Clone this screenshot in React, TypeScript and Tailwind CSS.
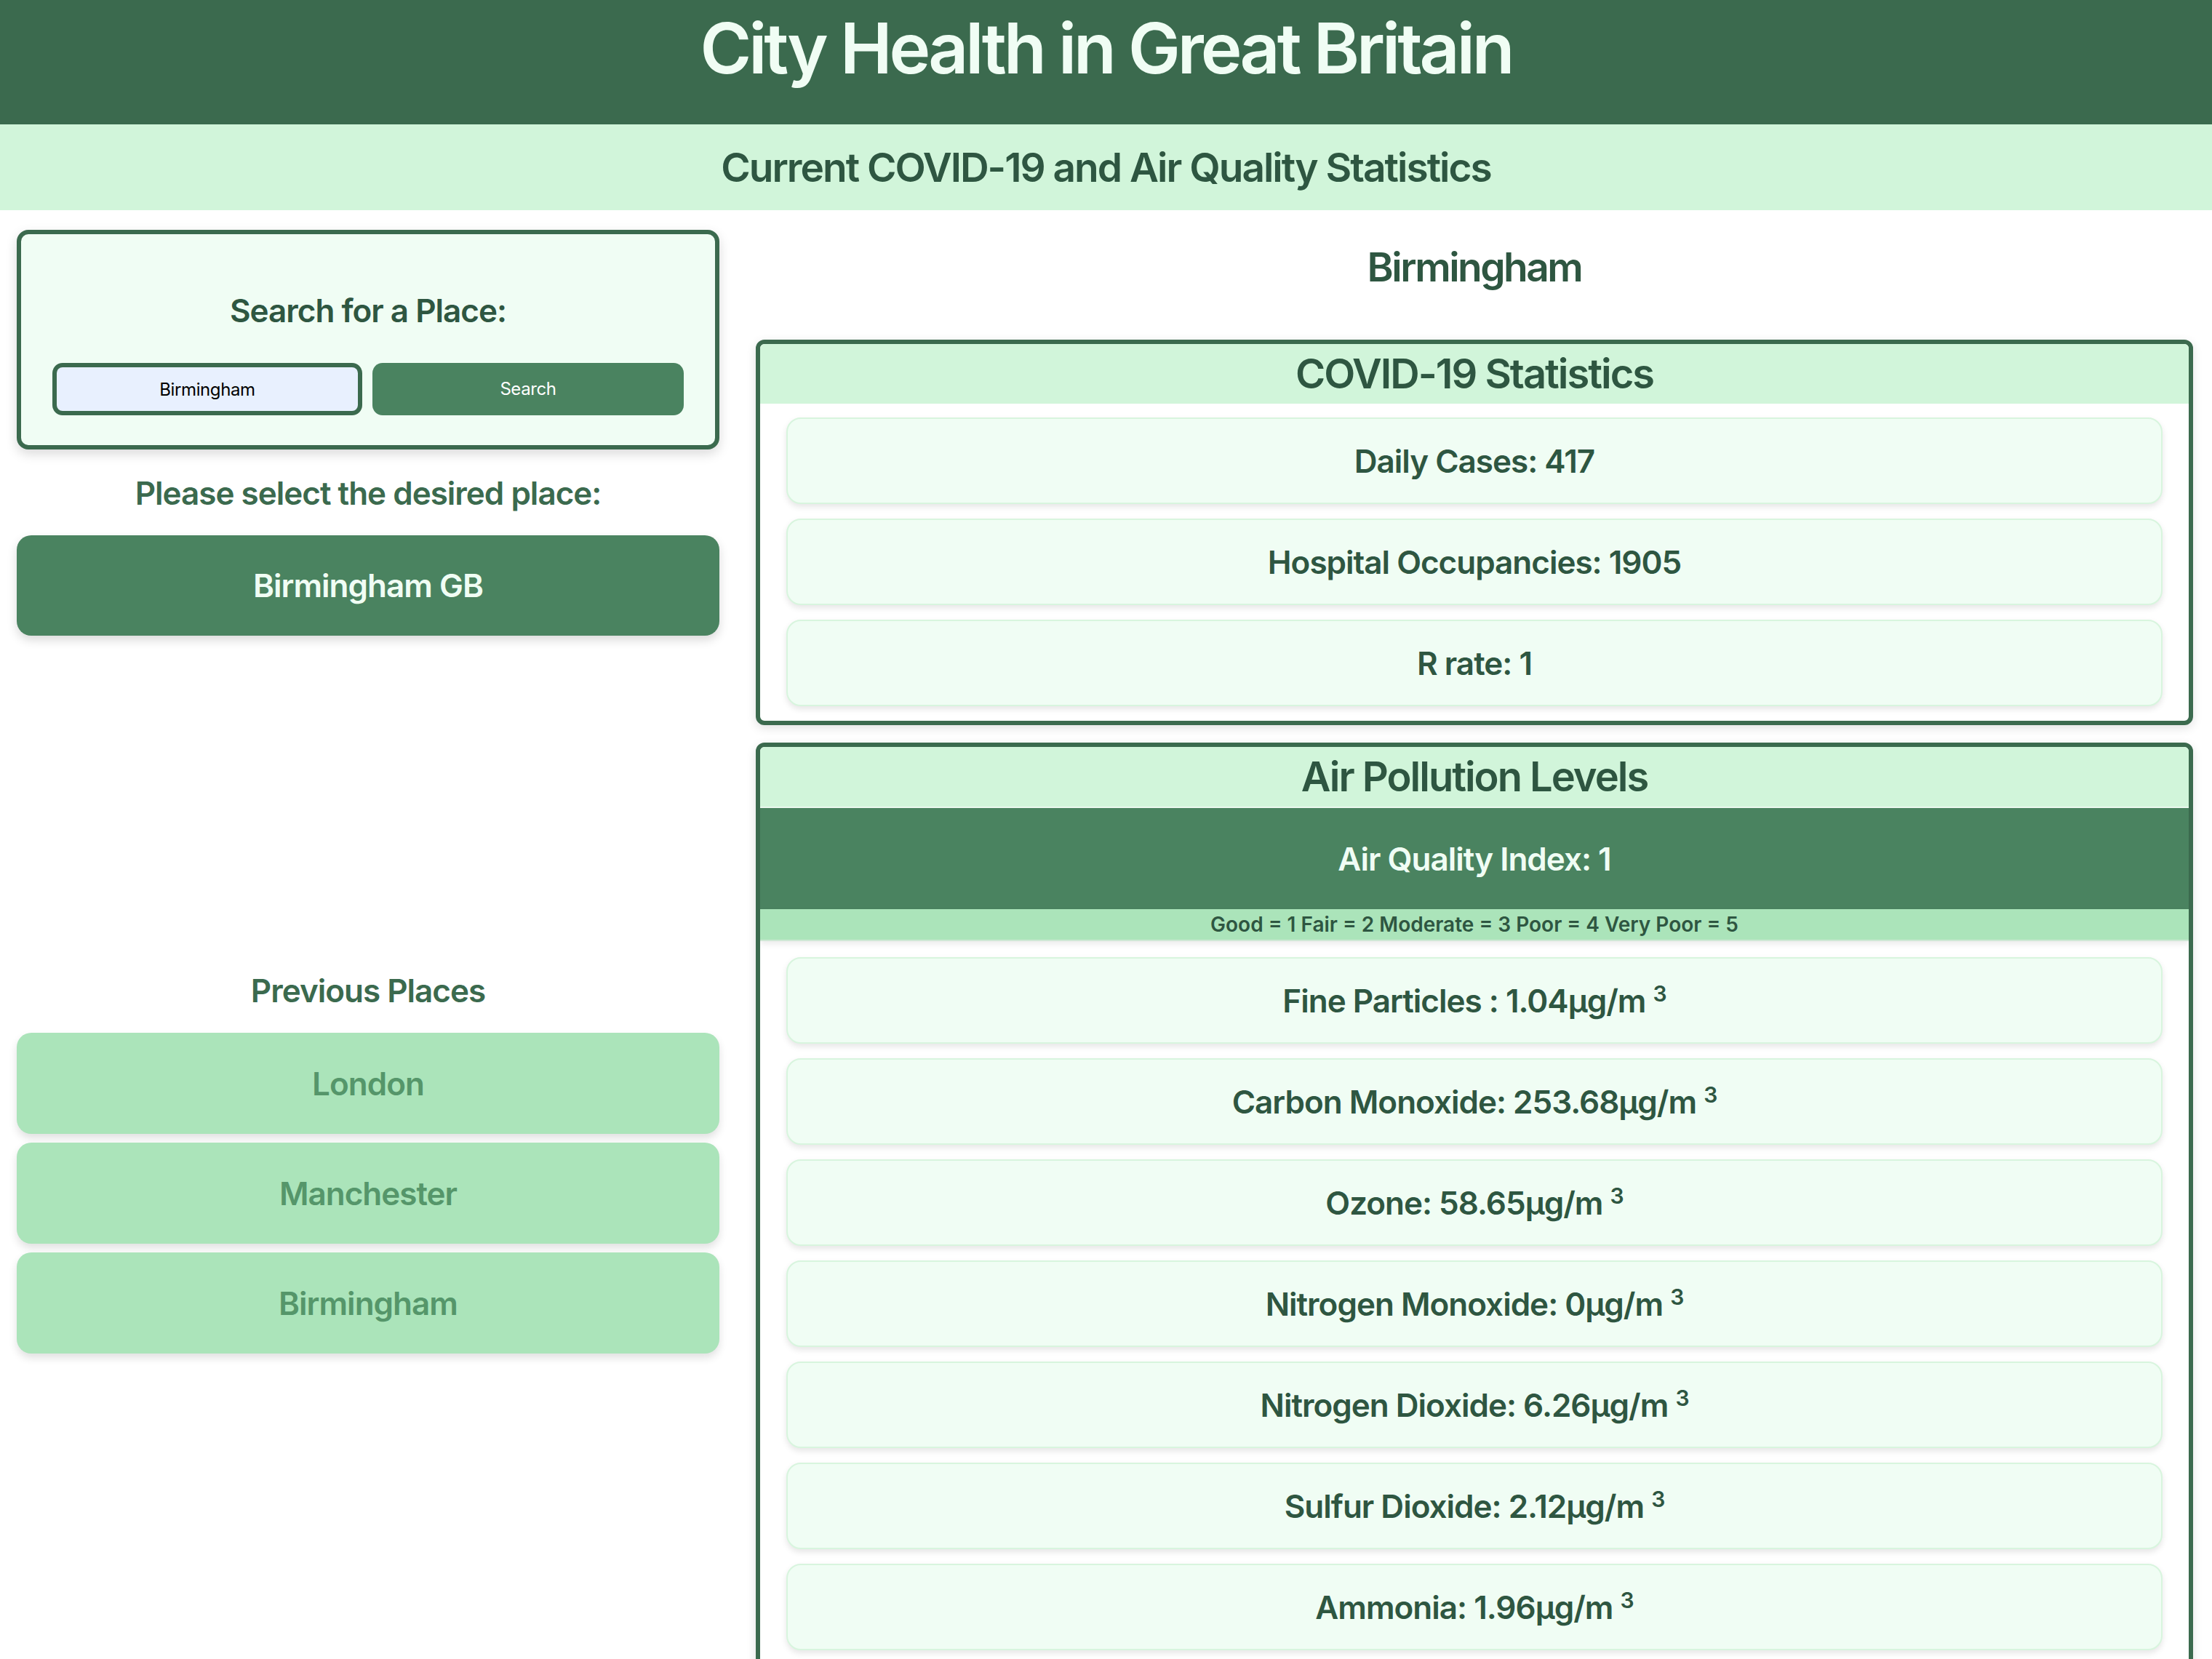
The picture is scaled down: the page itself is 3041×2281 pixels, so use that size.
import React from 'react';

const FONT = { fontFamily: 'Inter, "Noto Sans", sans-serif' };

const covidStats = [
  { label: 'Daily Cases', value: '417' },
  { label: 'Hospital Occupancies', value: '1905' },
  { label: 'R rate', value: '1' },
];

const pollutants = [
  { label: 'Fine Particles ', value: '1.04' },
  { label: 'Carbon Monoxide', value: '253.68' },
  { label: 'Ozone', value: '58.65' },
  { label: 'Nitrogen Monoxide', value: '0' },
  { label: 'Nitrogen Dioxide', value: '6.26' },
  { label: 'Sulfur Dioxide', value: '2.12' },
  { label: 'Ammonia', value: '1.96' },
];

const previousPlaces = ['London', 'Manchester', 'Birmingham'];

const StatCard: React.FC<{ children: React.ReactNode }> = ({ children }) => (
  <div className="h-[119px] mx-[36px] flex items-center justify-center rounded-[20px] border-2 border-[#d8f5de] bg-[#f0fdf4] shadow-[0_4px_8px_rgba(0,0,0,0.1)] text-[44px] leading-[52px] font-semibold tracking-[-1px] text-[#2e5641]">
    {children}
  </div>
);

const Panel: React.FC<{ title: string; children: React.ReactNode }> = ({ title, children }) => (
  <div className="rounded-[12px] border-[6px] border-[#3b6a4e] bg-white shadow-[0_4px_14px_rgba(0,0,0,0.12)] overflow-hidden">
    <div className="h-[82px] flex items-center justify-center bg-[#d1f5da] text-[56px] leading-[66px] font-semibold tracking-[-2px] text-[#2e5641]">
      {title}
    </div>
    {children}
  </div>
);

export default function App() {
  return (
    <div className="min-h-screen bg-white" style={FONT}>
      <header className="h-[171px] bg-[#3b6a4e] flex justify-center pt-[18px]">
        <h1 className="text-[96px] leading-[96px] font-semibold text-[#f0fdf4] tracking-[-4px]">City Health in Great Britain</h1>
      </header>
      <div className="h-[118px] bg-[#d1f5da] flex items-center justify-center">
        <h2 className="text-[55px] leading-[64px] font-semibold tracking-[-2px] text-[#2e5641]">Current COVID-19 and Air Quality Statistics</h2>
      </div>

      <main className="flex gap-[50px] pl-[23px] pr-[26px] pt-[27px]">
        {/* left column */}
        <div className="w-[966px] shrink-0 flex flex-col">
          <div className="rounded-[16px] border-[6px] border-[#3b6a4e] bg-[#f0fdf4] shadow-[0_6px_16px_rgba(0,0,0,0.15)] pt-[79px] pb-[41px] px-[43px] flex flex-col items-center">
            <h3 className="text-[44px] leading-[52px] font-semibold tracking-[-1px] text-[#2e5641]">Search for a Place:</h3>
            <div className="mt-[46px] w-full flex gap-[14px]">
              <input
                value="Birmingham"
                readOnly
                className="w-[426px] h-[72px] rounded-[14px] border-[6px] border-[#3b6a4e] bg-[#e8f0fe] text-center text-[24px] tracking-[-0.4px] text-black outline-none"
                style={FONT}
              />
              <button className="flex-1 h-[72px] rounded-[14px] bg-[#4a8360] text-[24px] tracking-[-0.4px] text-white">Search</button>
            </div>
          </div>

          <h3 className="mt-[34px] text-center text-[44px] leading-[52px] font-semibold tracking-[-1px] text-[#3b6a4e]">Please select the desired place:</h3>
          <button className="mt-[32px] h-[138px] rounded-[20px] bg-[#4a8360] shadow-[0_6px_14px_rgba(0,0,0,0.15)] text-[44px] font-semibold tracking-[-1px] text-[#f0fdf4]">
            Birmingham GB
          </button>

          <h3 className="mt-[462px] text-center text-[44px] leading-[52px] font-semibold tracking-[-1px] text-[#3b6a4e]">Previous Places</h3>
          <div className="mt-[32px] flex flex-col gap-[12px]">
            {previousPlaces.map((p) => (
              <button
                key={p}
                className="h-[139px] rounded-[20px] bg-[#abe4ba] shadow-[0_6px_12px_rgba(0,0,0,0.12)] text-[44px] font-semibold tracking-[-1px] text-[#55966a]"
              >
                {p}
              </button>
            ))}
          </div>
        </div>

        {/* right column */}
        <div className="flex-1 flex flex-col">
          <h2 className="mt-[18px] text-center text-[55px] leading-[66px] font-semibold tracking-[-2.5px] text-[#2e5641]">Birmingham</h2>

          <div className="mt-[67px]">
            <Panel title="COVID-19 Statistics">
              <div className="flex flex-col gap-[20px] pt-[19px] pb-[20px]">
                {covidStats.map((s) => (
                  <StatCard key={s.label}>
                    {s.label}: {s.value}
                  </StatCard>
                ))}
              </div>
            </Panel>
          </div>

          <div className="mt-[24px]">
            <Panel title="Air Pollution Levels">
              <div className="border-t-2 border-[#eaf8ee]">
                <div className="h-[139px] bg-[#4a8360] flex items-center justify-center text-[44px] leading-[52px] font-semibold tracking-[-1px] text-[#f0fdf4]">
                  Air Quality Index: 1
                </div>
                <div className="h-[44px] bg-[#abe4ba] border-b-2 border-[#cfe8d5] shadow-[0_4px_8px_rgba(0,0,0,0.08)] flex items-center justify-center text-[28px] leading-[34px] font-semibold text-[#2e5641]">
                  Good = 1 Fair = 2 Moderate = 3 Poor = 4 Very Poor = 5
                </div>
              </div>
              <div className="flex flex-col gap-[20px] pt-[22px] pb-[20px]">
                {pollutants.map((p) => (
                  <StatCard key={p.label}>
                    <span>
                      {p.label}: {p.value}µg/m <sup className="text-[30px]">3</sup>
                    </span>
                  </StatCard>
                ))}
              </div>
            </Panel>
          </div>
        </div>
      </main>
    </div>
  );
}
